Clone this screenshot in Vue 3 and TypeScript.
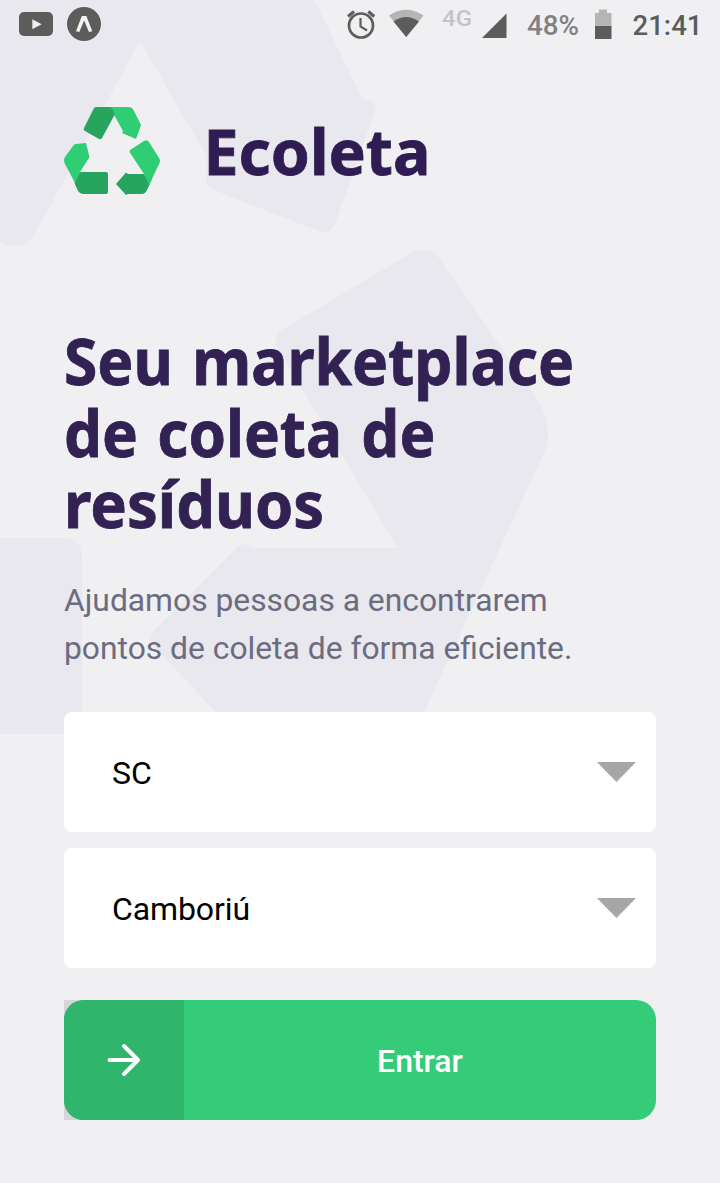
<script setup lang="ts">
interface Picker { label: string; value: string }

const headline: string[] = ['Seu marketplace', 'de coleta de', 'resíduos']
const pickers: Picker[] = [
  { label: 'Estado', value: 'SC' },
  { label: 'Cidade', value: 'Camboriú' },
]
</script>

<template>
  <div class="screen">
    <svg class="backdrop" viewBox="0 0 720 1183" aria-hidden="true">
      <path d="M0 0H314.500L361 96Q363 100 367 100Q378 100 375 111L335 224Q331 234 321 232L214 190Q206 187 206 177V155L143 46Q140 40 137 46L35 234Q28 246 15 246Q7 246 0 242Z" />
      <path d="M285 328L408 255Q429 243 440 259L535 396Q556 427 543 455L424 712H216L153 645Q147 639 153 632L238 547Q244 541 250 547L253 548H398L278 349Q270 337 285 328Z" />
      <path d="M0 538H62Q82 538 82 558V734H0Z" />
    </svg>

    <header class="status">
      <svg class="status-left" width="110" height="48" viewBox="0 0 110 48">
        <rect x="19" y="12" width="34" height="24" rx="5" fill="#5c5c5d" />
        <path d="M32.300 19.300v10l9.400-5z" fill="#eee" />
        <circle cx="84" cy="24" r="17" fill="#5c5c5d" />
        <path d="M76 31.300L81.800 16h4.600L92.300 31.300L89 32L84.100 20.500L79.300 32Z" fill="#f3f3f4" />
      </svg>
      <svg class="status-right" width="390" height="48" viewBox="330 0 390 48">
        <g fill="none" stroke="#5d5d5e" stroke-width="2.700">
          <circle cx="361" cy="25.500" r="12" />
          <path d="M360.500 18v8.500l6.500 4" stroke-width="2.200" />
          <path d="M348 16.500l6-5M374.300 16.500l-6-5" stroke-width="3" />
        </g>
        <path d="M389 15.500Q406 4 423.500 15.500L406.200 37z" fill="#b5b5b6" />
        <path d="M393.500 21.500Q406 12.500 419 21.500L406.200 37z" fill="#5c5c5d" />
        <text x="442" y="26" class="net" textLength="30" lengthAdjust="spacingAndGlyphs">4G</text>
        <path d="M506.500 13.500V38H482z" fill="#5c5c5d" />
        <text x="527" y="35" class="battery" textLength="52" lengthAdjust="spacingAndGlyphs">48%</text>
        <path d="M595 13h4v-3.500h8V13h4.500v13.500H595z" fill="#b5b5b6" />
        <path d="M595 26h16.500v13H595z" fill="#5c5c5d" />
        <text x="632.500" y="35" class="clock" textLength="70" lengthAdjust="spacingAndGlyphs">21:41</text>
      </svg>
    </header>

    <main class="content">
      <svg class="logo" width="370" height="96" viewBox="64 102 370 96" role="img" aria-label="Ecoleta">
        <path fill="#2fcd74" d="M109 107H128Q132 107 133.500 110L141 125L136 139L122 133L123 131L113 113Z" />
        <path fill="#27a45e" d="M96 107H110Q113 108 114.500 115L102 138Q101 140 99 139L85 131Q83 130 84 128L93 110Q94 107 96 107Z" />
        <path fill="#2fcd74" d="M65 157L73 146Q74 144 76 144L86 143L89.500 157L80 172L75 183L65 164Q63 160 65 157Z" />
        <path fill="#27a45e" d="M80 172H106Q108 172 108 174V192Q108 194 106 194H83Q80 194 78 191L74.500 183Z" />
        <path fill="#27a45e" d="M116 184L126 172.500L128 174H144L152 179L147 190Q145 194 142 194H128L126 195Z" />
        <path fill="#2fcd74" d="M130 150L144 141Q147 139 149 142L159 158Q161 161 159 164L149 185L144 174L129.500 152Z" />
        <text x="203.500" y="174.500" class="brand" textLength="227" lengthAdjust="spacingAndGlyphs">Ecoleta</text>
      </svg>

      <h1 class="title">
        <span v-for="(line, i) in headline" :key="line" :class="['line', `line-${i + 1}`]">{{ line }}</span>
      </h1>
      <p class="description">Ajudamos pessoas a encontrarem<br />pontos de coleta de forma eficiente.</p>

      <div class="pickers">
        <button v-for="p in pickers" :key="p.label" class="picker" type="button" :aria-label="p.label">
          <span>{{ p.value }}</span>
          <svg width="39" height="20" viewBox="0 0 39 20"><path d="M0 0h39L19.500 20z" fill="#a6a6a6" /></svg>
        </button>
      </div>

      <div class="enter-wrap">
        <button class="enter" type="button">
          <span class="enter-icon">
            <svg width="40" height="40" viewBox="0 0 40 40" fill="none" stroke="#fff" stroke-width="4" stroke-linecap="round" stroke-linejoin="round">
              <path d="M5.500 20H34M20 6l14 14-14 14" />
            </svg>
          </span>
          <span class="enter-label">Entrar</span>
        </button>
      </div>
    </main>
  </div>
</template>

<style>
body {
  margin: 0;
  background: #f0f0f3;
}
</style>

<style scoped>
.screen {
  position: relative;
  width: 720px;
  height: 1183px;
  overflow: hidden;
  background: #f0f0f3;
  font-family: Roboto, sans-serif;
}
.backdrop {
  position: absolute;
  inset: 0;
  fill: #e8e8ee;
}
.status {
  position: relative;
  display: flex;
  justify-content: space-between;
  height: 48px;
}
.net { font: 500 22px Roboto, sans-serif; fill: #c4c4c6; }
.battery { font: 500 28px Roboto, sans-serif; fill: #818182; }
.clock { font: 500 28px Roboto, sans-serif; fill: #5c5c5d; }
.content {
  position: relative;
  padding: 54px 64px 0;
}
.logo {
  display: block;
  overflow: visible;
}
.brand {
  font: 700 63px "Noto Sans", sans-serif;
  fill: #2f1c52;
  stroke: #2f1c52;
  stroke-width: 0.8px;
}
.title {
  height: 215px;
  margin: 127px 0 0;
  font: 700 64px/71.5px "Noto Sans", sans-serif;
  word-spacing: 4px;
  color: #322153;
  -webkit-text-stroke: 0.8px #322153;
}
.line {
  display: block;
  width: max-content;
  white-space: nowrap;
  transform-origin: left;
}
.line-1 { transform: scaleX(0.945); }
.line-2 { transform: scaleX(0.94); }
.line-3 { transform: scaleX(0.96); }
.description {
  margin: 36px 0 0;
  font-size: 31.8px;
  line-height: 48px;
  color: #6c6c80;
}
.pickers {
  display: grid;
  gap: 16px;
  margin-top: 40px;
}
.picker {
  display: flex;
  align-items: center;
  justify-content: space-between;
  height: 120px;
  padding: 2px 20px 0 48px;
  border: 0;
  border-radius: 8px;
  background: #fff;
  font: 400 32px Roboto, sans-serif;
  letter-spacing: -0.1px;
  color: #000;
}
.picker svg { margin-top: -2px; }
.enter-wrap {
  width: 592px;
  margin-top: 32px;
  background: linear-gradient(90deg, #d6d6da 120px, transparent 120px);
}
.enter {
  display: flex;
  width: 100%;
  height: 120px;
  padding: 0;
  border: 0;
  border-radius: 20px;
  overflow: hidden;
  background: #34cb79;
}
.enter-icon {
  display: grid;
  place-items: center;
  width: 120px;
  height: 120px;
  background: #30b56c;
}
.enter-label {
  flex: 1;
  font: 500 32px/122px Roboto, sans-serif;
  color: #fff;
}
</style>
